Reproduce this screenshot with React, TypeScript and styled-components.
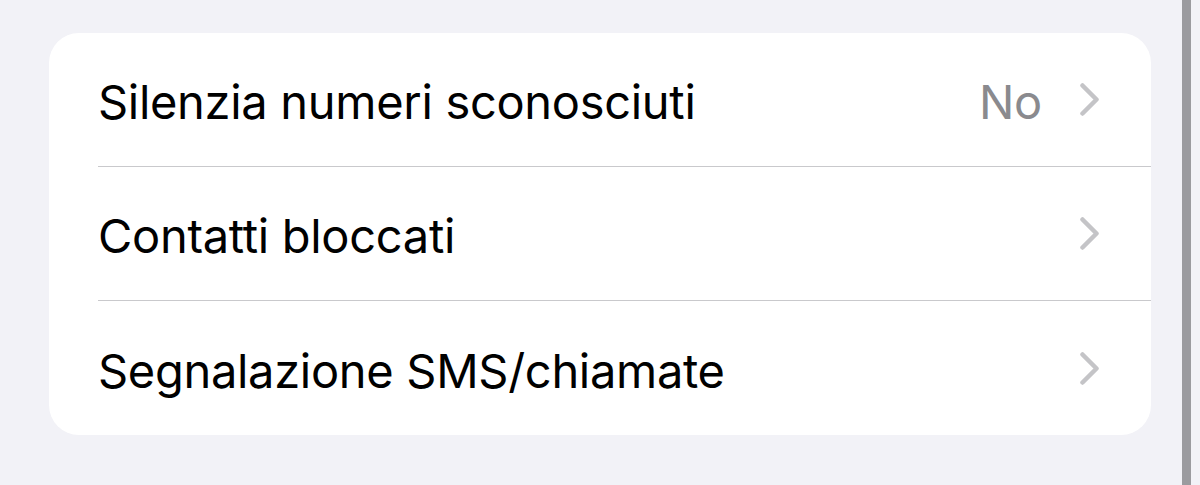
import React from "react";
import styled, { createGlobalStyle } from "styled-components";

const Global = createGlobalStyle`
  html, body { margin: 0; padding: 0; background: #f2f2f7; }
  body { width: 1200px; height: 485px; overflow: hidden; }
`;

const Page = styled.div`
  display: flex;
  width: 1200px;
  height: 485px;
  background: #f2f2f7;
  font-family: Inter, "Noto Sans", sans-serif;
`;

const Main = styled.div`
  flex: 1;
  padding: 33px 31px 0 49px;
`;

const EdgeBar = styled.div`
  width: 9px;
  margin-right: 9px;
  height: 100%;
  background: #9b9b9f;
`;

const Card = styled.div`
  background: #ffffff;
  border-radius: 30px;
  padding-left: 49px;
  overflow: hidden;
`;

const Row = styled.div<{ $last?: boolean }>`
  display: flex;
  align-items: center;
  height: 133px;
  padding-right: 52px;
  border-bottom: ${(p) => (p.$last ? "none" : "1px solid #c9c9cc")};
  &:last-child { height: 134px; }
`;

const Label = styled.div`
  flex: 1;
  font-size: 47px;
  color: #000;
  letter-spacing: -0.3px;
  padding-top: 4px;
`;

const Value = styled.div`
  font-size: 47px;
  color: #8a8a8e;
  letter-spacing: -0.3px;
  margin-right: 38px;
  padding-top: 4px;
`;

const Chevron = () => (
  <svg width="19" height="33" viewBox="0 0 19 33" fill="none">
    <path d="M2.5 2.5 L16.5 16.5 L2.5 30.5" stroke="#c4c4c7" strokeWidth="4.5" strokeLinecap="round" strokeLinejoin="round" />
  </svg>
);

const rows = [
  { label: "Silenzia numeri sconosciuti", value: "No" },
  { label: "Contatti bloccati" },
  { label: "Segnalazione SMS/chiamate" },
];

export default function App() {
  return (
    <Page>
      <Global />
      <Main>
        <Card>
          {rows.map((r, i) => (
            <Row key={r.label} $last={i === rows.length - 1}>
              <Label>{r.label}</Label>
              {r.value && <Value>{r.value}</Value>}
              <Chevron />
            </Row>
          ))}
        </Card>
      </Main>
      <EdgeBar />
    </Page>
  );
}
